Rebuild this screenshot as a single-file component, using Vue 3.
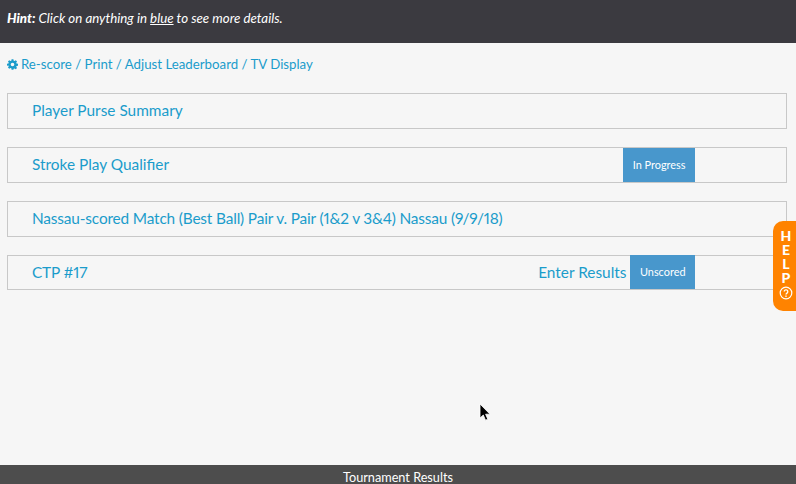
<script setup>
const rows = [
  { name: 'Player Purse Summary' },
  { name: 'Stroke Play Qualifier', status: 'In Progress' },
  { name: 'Nassau-scored Match (Best Ball) Pair v. Pair (1&2 v 3&4) Nassau (9/9/18)', tight: true },
  { name: 'CTP #17', action: 'Enter Results', status: 'Unscored', tight: true },
]
</script>

<template>
  <div class="page">
    <header class="hint">
      <p><b>Hint:</b> Click on anything in <u>blue</u> to see more details.</p>
    </header>

    <main class="content">
      <a class="tools">
        <svg class="gear" viewBox="0 0 24 24" aria-hidden="true">
          <path fill-rule="evenodd" d="M10 1h4l.6 3.1 1.9.8L19.1 3.100l2.800 2.800-1.800 2.600.8 1.900L24 11v4l-3.100.6-.8 1.900 1.800 2.600-2.800 2.800-2.600-1.800-1.900.8L14 24h-4l-.6-3.100-1.900-.8-2.600 1.800-2.800-2.800 1.800-2.600-.8-1.900L0 15v-4l3.100-.6.8-1.900L2.100 5.900l2.800-2.800 2.600 1.800 1.900-.8zM12 8.500a4 4 0 1 0 0 8 4 4 0 0 0 0-8z" transform="translate(0 -.5)" />
        </svg>
        Re-score / Print / Adjust Leaderboard / TV Display
      </a>

      <section class="list">
        <div v-for="row in rows" :key="row.name" class="row">
          <a class="name" :class="{ tight: row.tight }">{{ row.name }}</a>
          <a v-if="row.action" class="action">{{ row.action }}</a>
          <span v-if="row.status" class="status">{{ row.status }}</span>
        </div>
      </section>
    </main>

    <footer class="footer">Tournament Results</footer>

    <aside class="help">
      <span>H</span><span>E</span><span>L</span><span>P</span>
      <svg class="help-icon" viewBox="0 0 14 14" aria-hidden="true">
        <circle cx="7" cy="7" r="5.800" fill="none" stroke="#fff" stroke-width="1.200" />
        <path d="M5.200 5.600a1.800 1.800 0 1 1 2.800 1.500c-.7.500-1 .8-1 1.500" fill="none" stroke="#fff" stroke-width="1.300" />
        <rect x="6.300" y="9.500" width="1.400" height="1.400" fill="#fff" />
      </svg>
    </aside>

    <svg class="cursor" viewBox="0 0 12 20" aria-hidden="true">
      <path d="M1 1v14l3.300-3 2.200 5.200 2.300-1-2.200-5H11z" fill="#000" stroke="#fff" stroke-width=".8" />
    </svg>
  </div>
</template>

<style scoped>
.page {
  position: relative;
  display: flex;
  flex-direction: column;
  height: 484px;
  overflow: hidden;
  background: #f6f6f6;
  font-family: Lato, "Open Sans", sans-serif;
  font-variant-numeric: proportional-nums;
  color: #1b9ccb;
}
.hint {
  height: 43px;
  flex: none;
  display: flex;
  align-items: center;
  padding: 0 7px 7px;
  box-sizing: border-box;
  background: #3b3a40;
  color: #fff;
  font-size: 13.300px;
  font-style: italic;
}
.hint p { margin: 0; }
.hint b { font-weight: 900; }
.content {
  flex: 1;
  padding: 13px 9px 0 7px;
}
.tools {
  display: flex;
  align-items: center;
  gap: 3px;
  height: 16px;
  font-size: 13.250px;
  color: #1b9ccb;
}
.gear {
  width: 11px;
  height: 11px;
  fill: #1b9ccb;
}
.list {
  display: flex;
  flex-direction: column;
  gap: 18px;
  margin-top: 21px;
}
.row {
  display: flex;
  align-items: stretch;
  height: 36px;
  box-sizing: border-box;
  padding: 0 91px 0 24px;
  border: 1px solid #c8c8c8;
  font-size: 15.400px;
  line-height: 32px;
}
.row:last-child { height: 35px; }
.row:last-child .status { margin-top: -1px; }
.name { flex: 1; white-space: nowrap; }
.name.tight { letter-spacing: -0.160px; }
.action { margin-right: 4px; }
.status {
  display: flex;
  align-items: center;
  justify-content: center;
  padding: 0 9.500px;
  background: #4897cc;
  color: #fff;
  font-size: 10.900px;
  line-height: 1;
}
.footer {
  flex: none;
  height: 19px;
  background: #4d4d4d;
  color: #fff;
  font-size: 12.700px;
  line-height: 25px;
  text-align: center;
  overflow: hidden;
}
.help {
  position: absolute;
  top: 221px;
  right: 0;
  width: 23px;
  height: 90px;
  padding: 8px 0 0 3px;
  box-sizing: border-box;
  display: flex;
  flex-direction: column;
  align-items: center;
  background: #ff8300;
  border-radius: 10px 0 0 10px;
  color: #fff;
  font-size: 14px;
  font-weight: 900;
  line-height: 14px;
}
.help-icon {
  width: 14px;
  height: 14px;
  margin-top: 1px;
}
.cursor {
  position: absolute;
  left: 479px;
  top: 403px;
  width: 12px;
  height: 20px;
}
</style>
